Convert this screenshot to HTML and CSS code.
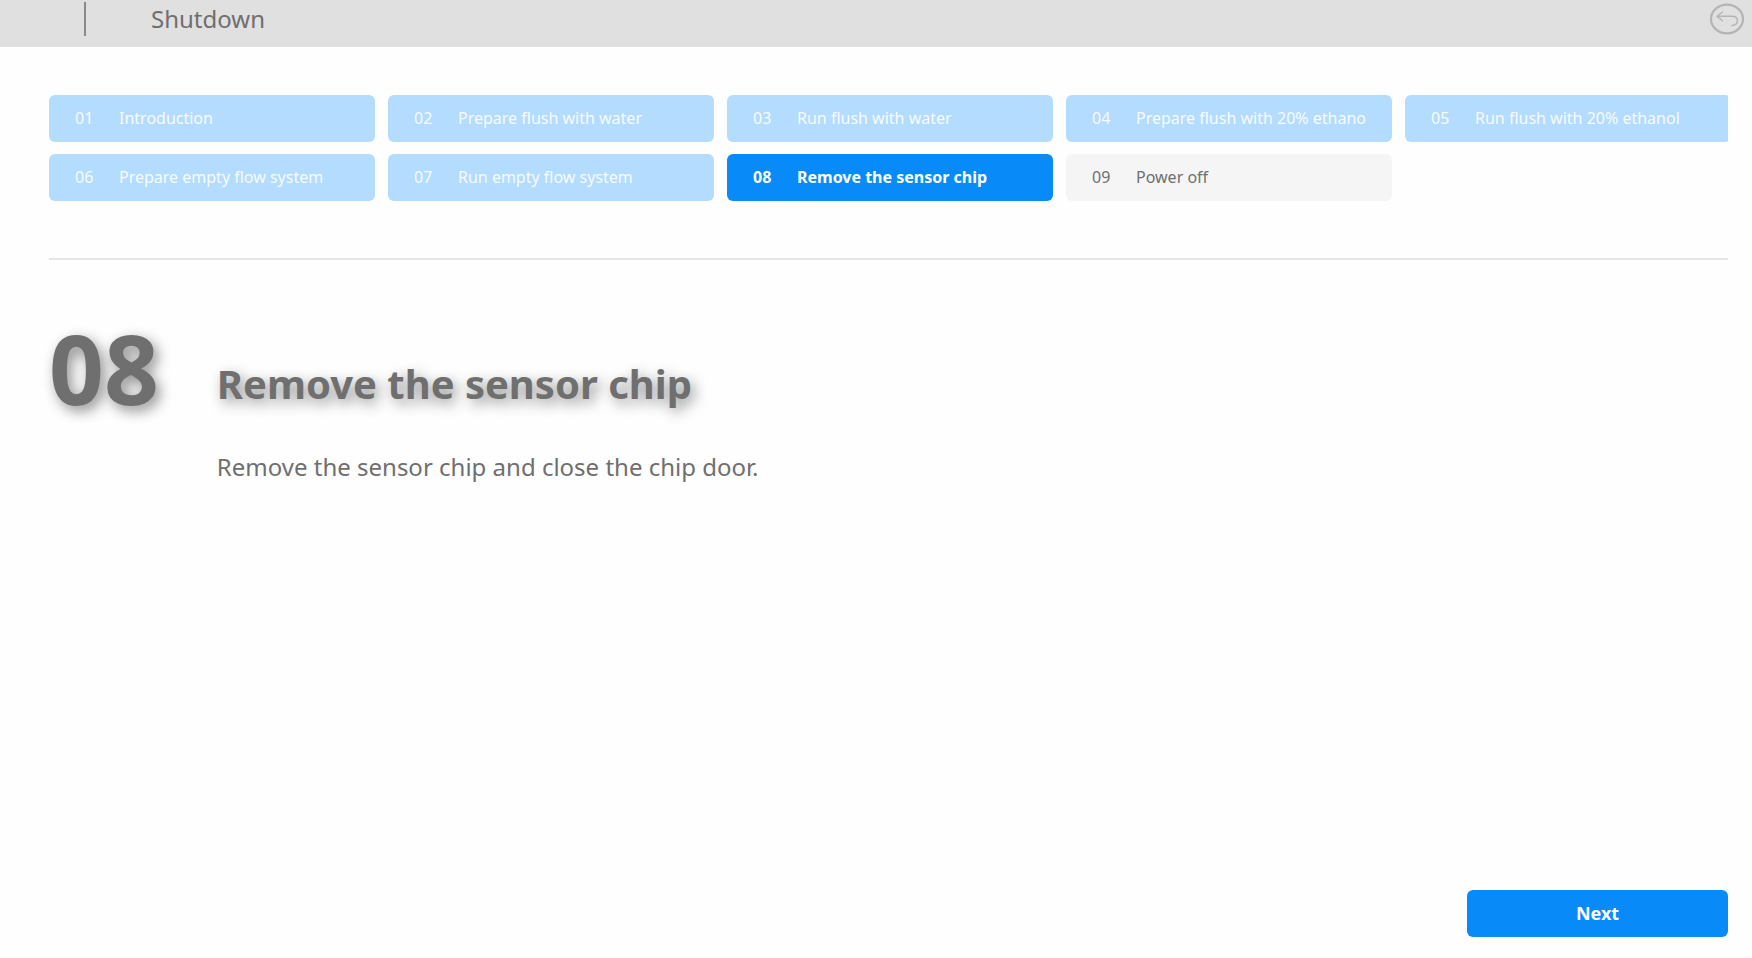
FILE: index.html
```html
<!DOCTYPE html>
<html lang="en">

<head>
    <meta charset="UTF-8" />
    <meta name="viewport" content="width=device-width, initial-scale=1" />
    <title>Shutdown</title>
    <link rel="stylesheet" href="styles.css">
</head>

<body>

    <!-- Top bar -->
    <header class="topbar">
        <span class="divider"></span>
        <h1 class="topbar-title">Shutdown</h1>
        <button class="back-btn" type="button" aria-label="Back">
            <svg width="34" height="34" viewBox="0 0 34 34" fill="none" stroke="#b4b4b4" stroke-linecap="round">
                <ellipse cx="17" cy="17" rx="16" ry="14.4" stroke-width="2.2" />
                <path d="M12.5 10 L7 14.3 L12.5 18.8 M7 14.3 H22 C29 14.3 29.5 22.5 21.8 23.6" stroke-width="1.4" />
            </svg>
        </button>
    </header>

    <!-- Main Content -->
    <main class="content">
        <ol class="steps">
            <li class="step done"><span class="step-no">01</span><span>Introduction</span></li>
            <li class="step done"><span class="step-no">02</span><span>Prepare flush with water</span></li>
            <li class="step done"><span class="step-no">03</span><span>Run flush with water</span></li>
            <li class="step done"><span class="step-no">04</span><span>Prepare flush with 20% ethano</span></li>
            <li class="step done"><span class="step-no">05</span><span>Run flush with 20% ethanol</span></li>
            <li class="step done"><span class="step-no">06</span><span>Prepare empty flow system</span></li>
            <li class="step done"><span class="step-no">07</span><span>Run empty flow system</span></li>
            <li class="step active" aria-current="step"><span class="step-no">08</span><span>Remove the sensor chip</span></li>
            <li class="step"><span class="step-no">09</span><span>Power off</span></li>
        </ol>

        <section class="detail">
            <div class="detail-no">08</div>
            <div class="detail-body">
                <h2>Remove the sensor chip</h2>
                <p>Remove the sensor chip and close the chip door.</p>
            </div>
        </section>

        <div class="actions">
            <button class="next-btn" type="button">Next</button>
        </div>
    </main>

</body>

</html>
```

FILE: styles.css
```css
* {
    margin: 0;
    padding: 0;
    box-sizing: border-box;
    font-family: 'Noto Sans', 'Open Sans', sans-serif;
}

body {
    display: flex;
    flex-direction: column;
    min-height: 100vh;
    background-color: #fefefe;
    color: #6f6f6f;
}

/* Top bar */
.topbar {
    display: flex;
    align-items: flex-start;
    height: 47px;
    padding: 2px 8px 0 84px;
    background-color: #e0e0e0;
}

.divider {
    width: 2px;
    height: 34px;
    background-color: #8a8a8a;
}

.topbar-title {
    margin-left: 65px;
    font-size: 24px;
    font-weight: normal;
    line-height: 34px;
}

.back-btn {
    height: 34px;
    margin-left: auto;
    border: none;
    background: none;
    cursor: pointer;
}

.back-btn svg {
    display: block;
}

/* Layout */
.content {
    display: flex;
    flex: 1;
    flex-direction: column;
    padding: 48px 24px 21px 49px;
}

/* Steps */
.steps {
    display: grid;
    grid-template-columns: repeat(5, minmax(326px, 1fr));
    gap: 12px 13px;
    padding-bottom: 57px;
    border-bottom: 2px solid #e6e6e6;
    list-style: none;
    overflow: hidden;
}

.step {
    display: flex;
    align-items: center;
    height: 47px;
    padding: 0 26px 2px;
    border-radius: 6px;
    background-color: #f5f5f5;
    font-size: 16px;
    white-space: nowrap;
}

.step-no {
    width: 44px;
}

.step.done {
    background-color: #b3dcff;
    color: #f7fbff;
}

.step.active {
    background-color: #088af8;
    color: #ffffff;
    font-weight: bold;
}

/* Current step */
.detail {
    display: flex;
    align-items: flex-start;
    gap: 58px;
    padding-top: 56px;
}

.detail-no {
    font-size: 96px;
    font-weight: bold;
    line-height: 104px;
    text-shadow: 4px 5px 14px rgba(0, 0, 0, 0.45);
}

.detail-body h2 {
    padding-top: 42px;
    font-size: 40px;
    line-height: 52px;
    text-shadow: 4px 5px 14px rgba(0, 0, 0, 0.45);
}

.detail-body p {
    padding-top: 40px;
    font-size: 24px;
    line-height: 34px;
}

/* Actions */
.actions {
    display: flex;
    justify-content: flex-end;
    margin-top: auto;
}

.next-btn {
    width: 261px;
    height: 47px;
    padding-bottom: 2px;
    border: none;
    border-radius: 6px;
    background-color: #088af8;
    color: #ffffff;
    font-size: 18px;
    font-weight: bold;
    cursor: pointer;
}
```
